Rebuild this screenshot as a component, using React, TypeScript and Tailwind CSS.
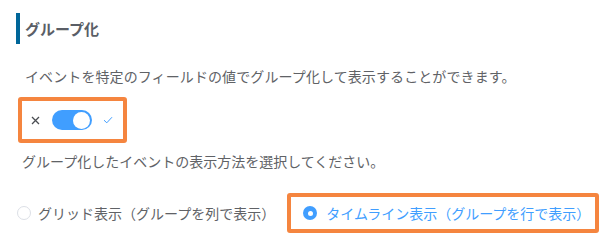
import React, { useState } from "react";

const jp = "font-['Noto_Sans_CJK_JP','Noto_Sans',sans-serif]";

export default function App() {
  const [grouped, setGrouped] = useState(true);
  const [mode, setMode] = useState<"grid" | "timeline">("timeline");

  return (
    <div className={`w-[610px] h-[250px] bg-white pl-[16px] pt-[13px] text-[#606266] ${jp}`}>
      {/* section title */}
      <div className="h-[31px] border-l-4 border-[#006699] pl-[5px] flex items-center">
        <span className="text-[15px] font-bold text-[#5a5e66] leading-none">グループ化</span>
      </div>

      <p className="mt-[22px] pl-[9px] text-[14px] leading-[20px] tracking-[0.1px]">
        イベントを特定のフィールドの値でグループ化して表示することができます。
      </p>

      {/* switch */}
      <div className="mt-[11px] ml-[2px] w-[109px] h-[46px] border-4 border-[#f5853f] rounded-[3px] flex items-center pl-[9px]">
        <svg width="9" height="9" viewBox="0 0 9 9" className="shrink-0">
          <path d="M1 1L8 8M8 1L1 8" stroke="#4a4d52" strokeWidth="1.3" fill="none" />
        </svg>
        <button
          onClick={() => setGrouped(g => !g)}
          className={`ml-[12px] w-[40px] h-[20px] rounded-full flex items-center px-[2px] ${grouped ? "bg-[#409eff] justify-end" : "bg-[#dcdfe6] justify-start"}`}
        >
          <span className="w-[17px] h-[17px] rounded-full bg-white block" />
        </button>
        <svg width="10" height="8" viewBox="0 0 10 8" className="ml-[11px] shrink-0">
          <path d="M1 4.2L3.8 6.8L9 1.2" stroke={grouped ? "#409eff" : "#909399"} strokeWidth="1" fill="none" />
        </svg>
      </div>

      <p className="mt-[8px] pl-[6px] text-[14px] leading-[20px]">
        グループ化したイベントの表示方法を選択してください。
      </p>

      {/* radios */}
      <div className="mt-[22px] flex items-center">
        <button onClick={() => setMode("grid")} className="flex items-center ml-[1px]">
          {mode === "grid" ? (
            <span className="w-[14px] h-[14px] rounded-full bg-[#409eff] flex items-center justify-center">
              <span className="w-[5px] h-[5px] rounded-full bg-white" />
            </span>
          ) : (
            <span className="w-[14px] h-[14px] rounded-full border border-[#dcdfe6] bg-white" />
          )}
          <span className={`ml-[7px] text-[14px] leading-[20px] ${mode === "grid" ? "text-[#409eff]" : "text-[#606266]"}`}>
            グリッド表示（グループを列で表示）
          </span>
        </button>

        <div className="ml-[12px] w-[312px] h-[40px] border-4 border-[#f5853f] rounded-[3px] flex items-center pl-[12px]">
          <button onClick={() => setMode("timeline")} className="flex items-center">
            {mode === "timeline" ? (
              <span className="w-[14px] h-[14px] rounded-full bg-[#409eff] flex items-center justify-center">
                <span className="w-[5px] h-[5px] rounded-full bg-white" />
              </span>
            ) : (
              <span className="w-[14px] h-[14px] rounded-full border border-[#dcdfe6] bg-white" />
            )}
            <span className={`ml-[9px] text-[14px] leading-[20px] ${mode === "timeline" ? "text-[#409eff]" : "text-[#606266]"}`}>
              タイムライン表示（グループを行で表示）
            </span>
          </button>
        </div>
      </div>
    </div>
  );
}
